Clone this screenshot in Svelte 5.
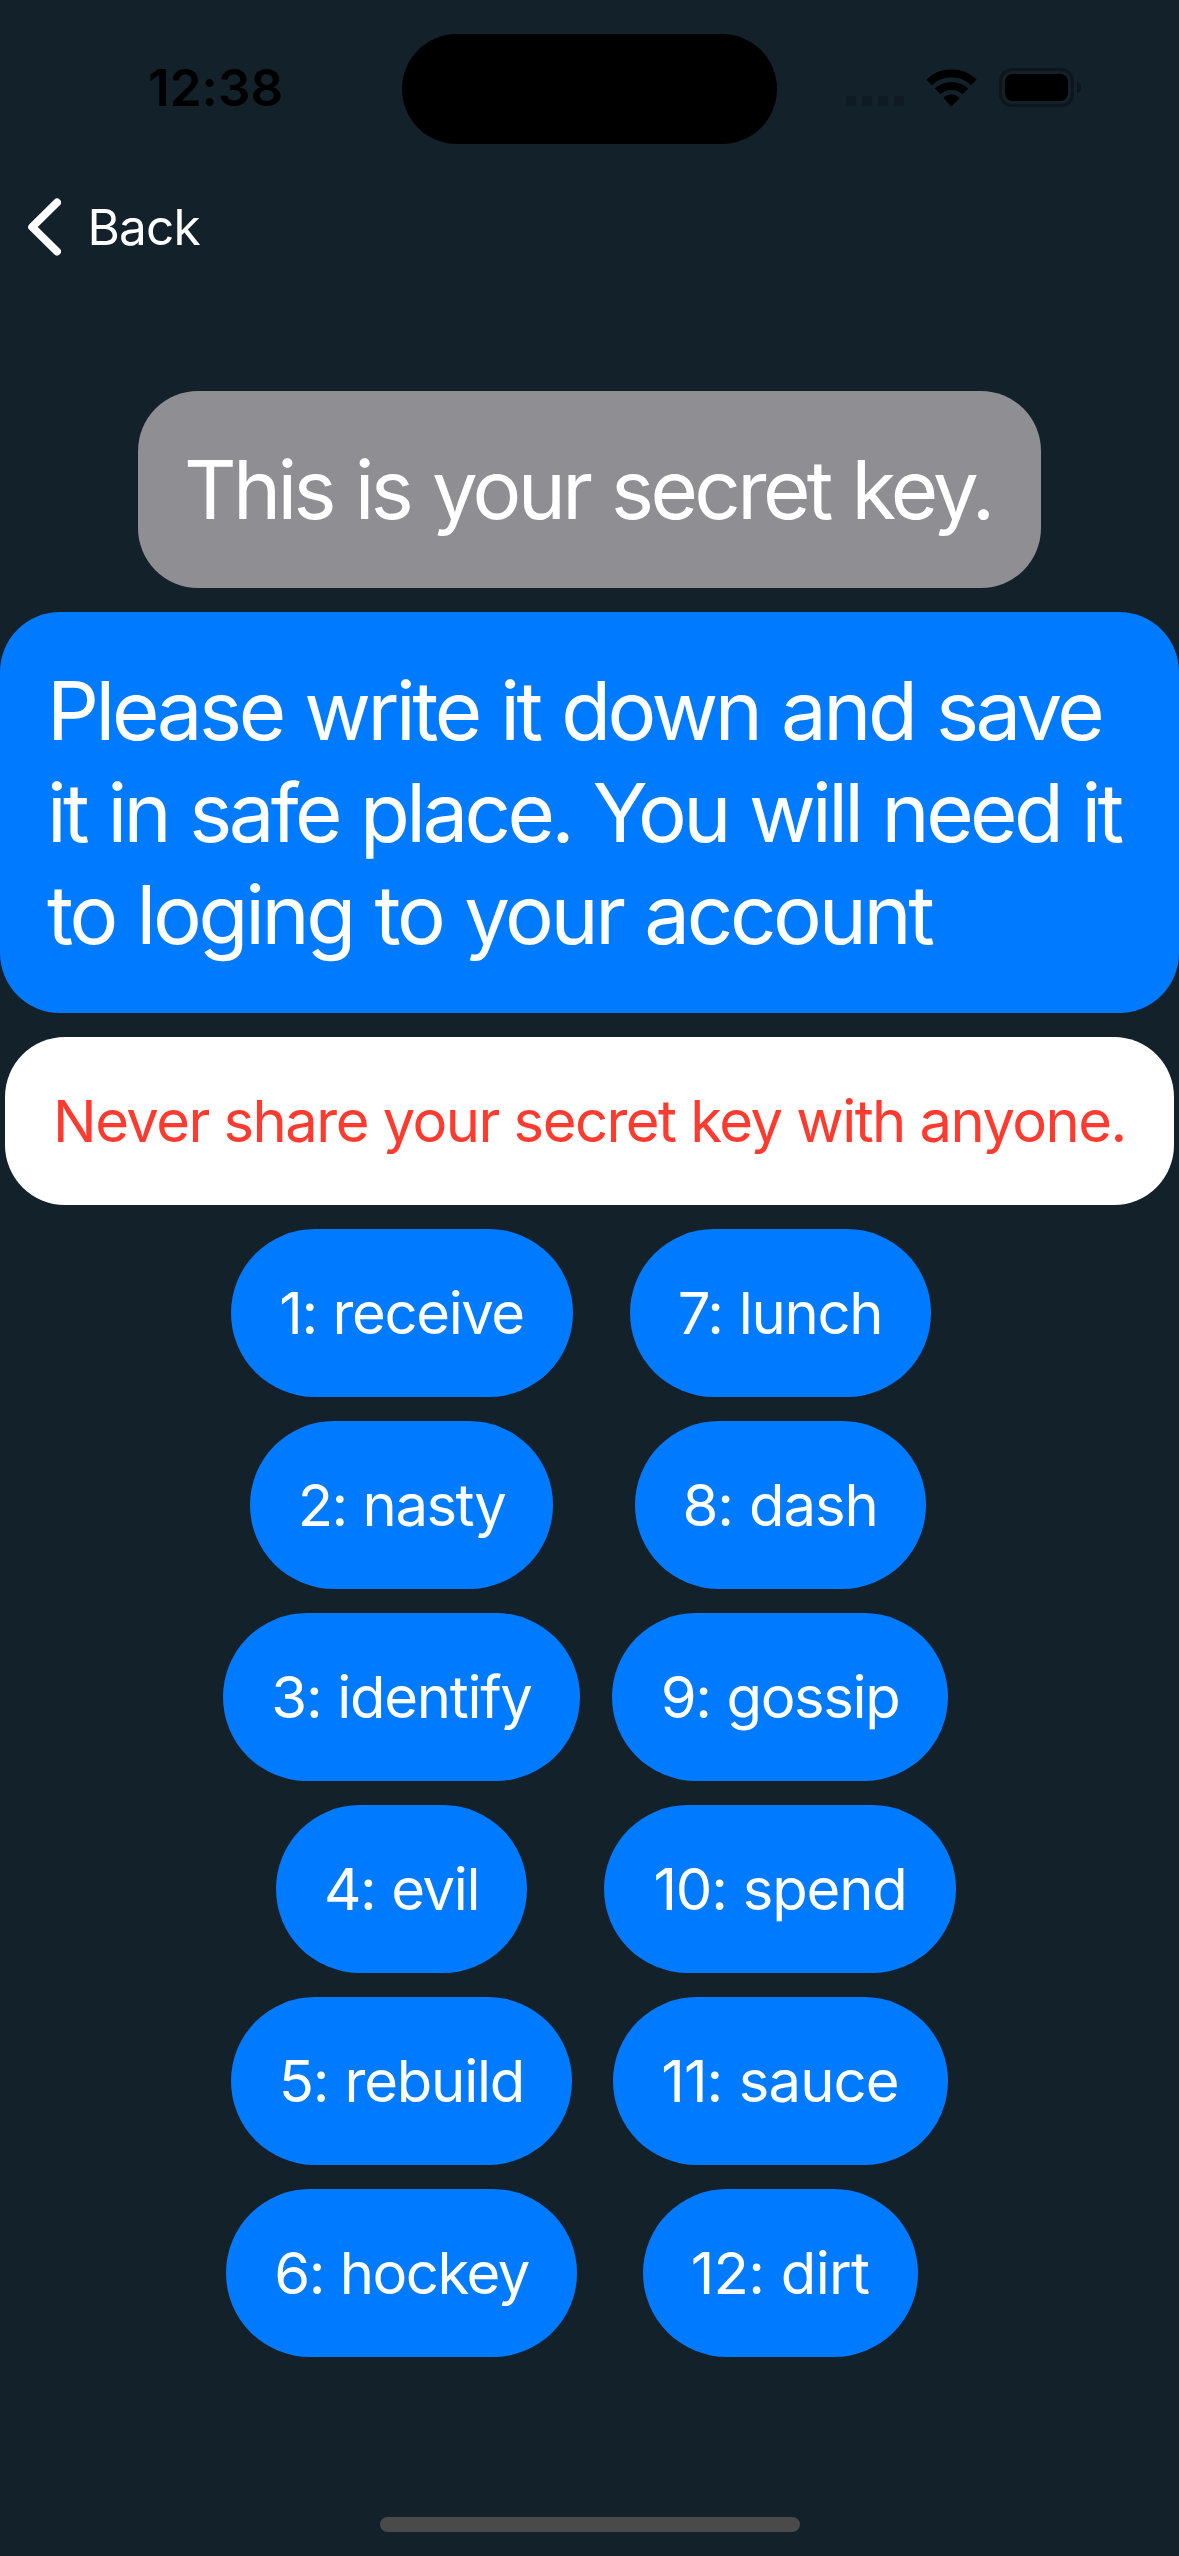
<script>
  // width and tracking are in pixels
  const columns = [
    [
      { word: 'receive', width: 342, tracking: -1.4 },
      { word: 'nasty', width: 303, tracking: -1.5 },
      { word: 'identify', width: 357, tracking: -1.3 },
      { word: 'evil', width: 251, tracking: -1.4 },
      { word: 'rebuild', width: 341, tracking: -1.2 },
      { word: 'hockey', width: 351, tracking: -1.5 },
    ],
    [
      { word: 'lunch', width: 301, tracking: -1.3 },
      { word: 'dash', width: 291, tracking: -1.1 },
      { word: 'gossip', width: 336, tracking: -1.4 },
      { word: 'spend', width: 352, tracking: -1.2 },
      { word: 'sauce', width: 335, tracking: -0.9 },
      { word: 'dirt', width: 275, tracking: -0.7 },
    ],
  ];
</script>

<div class="screen">
  <header class="status">
    <span class="time">12:38</span>
    <span class="island"></span>
    <span class="indicators">
      <svg class="dots" width="58" height="10" viewBox="0 0 58 10" fill="#0f1a24">
        <rect x="0" width="10" height="10" rx="3" />
        <rect x="16" width="10" height="10" rx="3" />
        <rect x="32" width="10" height="10" rx="3" />
        <rect x="48" width="10" height="10" rx="3" />
      </svg>
      <svg class="wifi" width="51" height="38" viewBox="0 0 51 38" fill="#000">
        <path d="M0.4 10.6 Q11 0.2 25.5 0.2 T50.6 10.6 L45 16.3 Q37 8.3 25.5 8.3 T6 16.3 Z" />
        <path d="M8.8 19.6 Q16 12.9 25.5 12.9 T42.2 19.6 L36.6 25.3 Q32 20.9 25.5 20.9 T14.4 25.3 Z" />
        <path d="M17.4 29 Q21 25.6 25.5 25.6 T33.6 29 L25.5 37.6 Z" />
      </svg>
      <svg class="battery" width="82" height="39" viewBox="0 0 82 39">
        <rect x="1.5" y="1.5" width="72" height="36" rx="11.5" fill="none" stroke="#0d161d" stroke-width="3" />
        <rect x="6" y="6" width="63" height="27" rx="7.5" fill="#000" />
        <path d="M78 13.5 Q82 15 82 19.5 T78 25.5 Z" fill="#0d161d" />
      </svg>
    </span>
  </header>

  <nav class="nav">
    <svg width="34" height="58" viewBox="0 0 34 58">
      <path d="M30 4.5 L5.2 29 L30 53.5" fill="none" stroke="#fff" stroke-width="8" stroke-linecap="round" stroke-linejoin="round" />
    </svg>
    <span class="back">Back</span>
  </nav>

  <main>
    <div class="bubble heading">This is your secret key.</div>
    <div class="bubble advice">
      <span class="l1">Please write it down and save</span>
      <span class="l2">it in safe place. You will need it</span>
      <span class="l3">to loging to your account</span>
    </div>
    <div class="bubble warning">Never share your secret key with anyone.</div>
    <div class="words">
      {#each columns as words, c}
        <div class="column">
          {#each words as { word, width, tracking }, i}
            <div class="pill" style="width: {width}px; letter-spacing: {tracking}px">{c * 6 + i + 1}: {word}</div>
          {/each}
        </div>
      {/each}
    </div>
  </main>

  <div class="home"></div>
</div>

<style>
  :global(body) { background: #13212b; }
  .screen {
    width: 1179px;
    height: 2556px;
    box-sizing: border-box;
    padding-bottom: 24px;
    background: #13212b;
    color: #fff;
    font-family: Inter, "Liberation Sans", sans-serif;
    display: flex;
    flex-direction: column;
    overflow: hidden;
    white-space: nowrap;
  }
  .status {
    height: 110px;
    padding-top: 34px;
    display: grid;
    grid-template-columns: 402px 375px 402px;
    align-items: center;
    color: #000;
  }
  .time {
    padding-left: 148px;
    padding-bottom: 2px;
    font-size: 51px;
    line-height: 60px;
    font-weight: 600;
    letter-spacing: 0.1px;
  }
  .island { height: 110px; border-radius: 55px; background: #000; }
  .indicators { display: flex; align-items: center; padding-left: 69px; padding-bottom: 3px; }
  .dots { margin-top: 27px; }
  .wifi { margin-left: 22px; }
  .battery { margin-left: 22px; }
  .nav {
    height: 132px;
    margin-top: 17px;
    padding-left: 27px;
    display: flex;
    align-items: center;
  }
  .back { margin-left: 26.5px; font-size: 49.5px; letter-spacing: -0.8px; }
  main {
    margin-top: 98px;
    display: flex;
    flex-direction: column;
    align-items: center;
    gap: 24px;
  }
  .bubble { box-sizing: border-box; border-radius: 60px; padding: 48px; }
  .heading {
    width: 903px;
    height: 197px;
    padding: 48px 46px;
    font-size: 81.5px;
    line-height: 101px;
    letter-spacing: -3.65px;
    word-spacing: 2.5px;
    background: #8e8e93;
  }
  .advice {
    width: 1179px;
    height: 401px;
    padding-left: 47px;
    font-size: 81.5px;
    line-height: 102px;
    word-spacing: 2px;
    background: #007aff;
    display: flex;
    flex-direction: column;
    align-items: flex-start;
  }
  .l1 { letter-spacing: -3.45px; }
  .l2 { letter-spacing: -3.64px; }
  .l3 { letter-spacing: -3.35px; }
  .warning {
    width: 1169px;
    height: 168px;
    font-size: 58px;
    line-height: 72px;
    letter-spacing: -1.55px;
    color: #ff3b30;
    background: #fff;
  }
  .words { display: flex; gap: 24px; }
  .column { display: flex; flex-direction: column; align-items: center; gap: 24px; }
  .pill {
    height: 168px;
    box-sizing: border-box;
    padding: 48px 0;
    border-radius: 84px;
    background: #007aff;
    font-size: 58px;
    line-height: 72px;
    word-spacing: 1px;
    text-align: center;
  }
  .home {
    width: 420px;
    height: 15px;
    margin: auto auto 0;
    border-radius: 8px;
    background: #4a4a4a;
  }
</style>
